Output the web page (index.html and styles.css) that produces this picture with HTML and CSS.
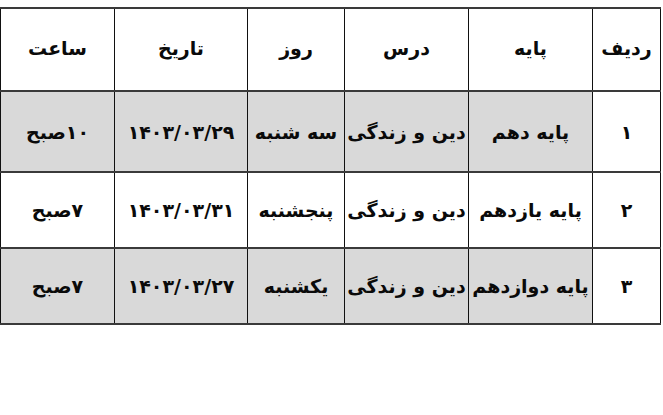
FILE: index.html
```html
<!DOCTYPE html>
<html lang="fa" dir="rtl">
<head>
<meta charset="utf-8">
<link rel="stylesheet" href="styles.css">
</head>
<body>
<div class="page">
<table class="schedule">
  <colgroup>
    <col class="c-row"><col class="c-grade"><col class="c-lesson"><col class="c-day"><col class="c-date"><col class="c-time">
  </colgroup>
  <thead>
    <tr class="head">
      <th>ردیف</th><th>پایه</th><th>درس</th><th>روز</th><th>تاریخ</th><th>ساعت</th>
    </tr>
  </thead>
  <tbody>
    <tr class="r1 shaded">
      <td class="num">۱</td><td>پایه دهم</td><td>دین و زندگی</td><td>سه شنبه</td><td class="date">۱۴۰۳/۰۳/۲۹</td><td>۱۰صبح</td>
    </tr>
    <tr class="r2">
      <td class="num">۲</td><td>پایه یازدهم</td><td>دین و زندگی</td><td>پنجشنبه</td><td class="date">۱۴۰۳/۰۳/۳۱</td><td>۷صبح</td>
    </tr>
    <tr class="r3 shaded">
      <td class="num">۳</td><td>پایه دوازدهم</td><td>دین و زندگی</td><td>یکشنبه</td><td class="date">۱۴۰۳/۰۳/۲۷</td><td>۷صبح</td>
    </tr>
  </tbody>
</table>
</div>
</body>
</html>
```
FILE: styles.css
```css
html, body {
  margin: 0;
  padding: 0;
  background: #ffffff;
}
.page {
  padding: 7px 2px 0 1px;
}
.schedule {
  width: 660px;
  border-collapse: collapse;
  table-layout: fixed;
  font-family: "DejaVu Sans", sans-serif;
  color: #0a0a0a;
}
.c-row { width: 68px; }
.c-grade { width: 124px; }
.c-lesson { width: 124px; }
.c-day { width: 97px; }
.c-date { width: 133px; }
.c-time { width: 114px; }

.schedule th,
.schedule td {
  border-left: 1.5px solid #111;
  border-right: 1.5px solid #111;
  border-top: 2px solid #3a3a3a;
  border-bottom: 2px solid #3a3a3a;
  text-align: center;
  vertical-align: middle;
  padding: 0;
  white-space: nowrap;
  overflow: hidden;
}
.schedule th {
  font-size: 19px;
  font-weight: bold;
  height: 77px;
  padding-bottom: 4px;
}
.schedule td {
  font-size: 19px;
  font-weight: bold;
}
.r1 td { height: 79px; }
.r2 td, .r3 td { height: 74px; }
.shaded td { background: #d9d9d9; }
.shaded td.num { background: #ffffff; }
```
